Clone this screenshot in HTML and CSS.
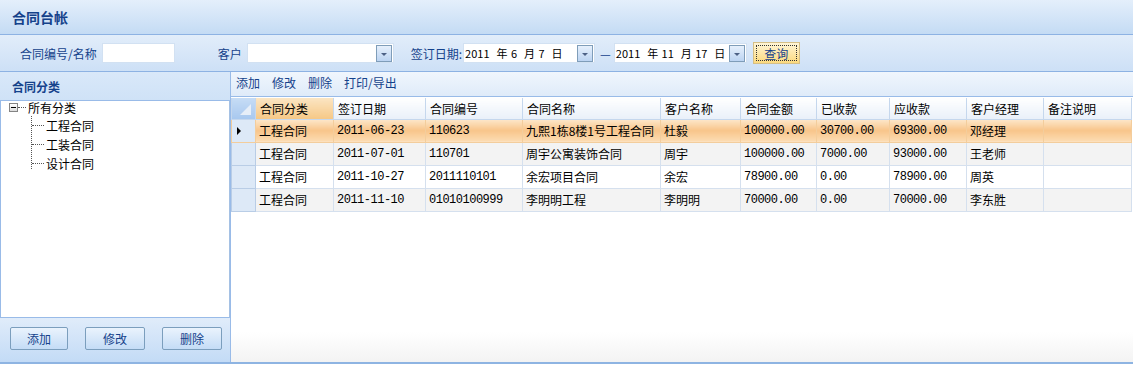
FILE: index.html
```html
<!DOCTYPE html>
<html lang="zh-CN">
  <head>
    <meta charset="UTF-8" />
    <title>合同台帐</title>
    <link rel="stylesheet" href="styles.css">
  </head>
  <body>
    <div class="title-bar">合同台帐</div>

    <div class="filter-bar">
      <label class="lbl">合同编号/名称</label>
      <input class="txt txt-code" type="text" />
      <label class="lbl lbl-client">客户</label>
      <div class="combo combo-client">
        <span class="combo-text"></span>
        <span class="drop-btn"><i></i></span>
      </div>
      <label class="lbl lbl-date">签订日期:</label>
      <div class="combo combo-date">
        <span class="combo-text">2011 &nbsp;年 6 &nbsp;月 7 &nbsp;日</span>
        <span class="drop-btn"><i></i></span>
      </div>
      <span class="dash">—</span>
      <div class="combo combo-date2">
        <span class="combo-text">2011 &nbsp;年 11 &nbsp;月 17 &nbsp;日</span>
        <span class="drop-btn"><i></i></span>
      </div>
      <button class="btn-query">查询</button>
    </div>

    <div class="main">
      <div class="side">
        <div class="side-head">合同分类</div>
        <div class="tree">
          <div class="tree-root"><span class="minus"></span><span class="dots-h"></span>所有分类</div>
          <div class="tree-kids">
            <div class="tree-item">工程合同</div>
            <div class="tree-item">工装合同</div>
            <div class="tree-item last">设计合同</div>
          </div>
        </div>
        <div class="side-foot">
          <button class="btn">添加</button>
          <button class="btn">修改</button>
          <button class="btn">删除</button>
        </div>
      </div>

      <div class="content">
        <div class="toolbar">
          <span>添加</span>
          <span>修改</span>
          <span>删除</span>
          <span>打印/导出</span>
        </div>
        <table class="grid">
          <colgroup>
            <col style="width:24px">
            <col style="width:78px">
            <col style="width:92px">
            <col style="width:97px">
            <col style="width:138px">
            <col style="width:80px">
            <col style="width:76px">
            <col style="width:73px">
            <col style="width:77px">
            <col style="width:77px">
            <col style="width:88px">
          </colgroup>
          <thead>
            <tr>
              <th class="sel-head"><i></i></th>
              <th class="active">合同分类</th>
              <th>签订日期</th>
              <th>合同编号</th>
              <th>合同名称</th>
              <th>客户名称</th>
              <th>合同金额</th>
              <th>已收款</th>
              <th>应收款</th>
              <th>客户经理</th>
              <th>备注说明</th>
            </tr>
          </thead>
          <tbody>
            <tr class="current">
              <td class="sel"><b></b></td>
              <td>工程合同</td>
              <td class="num">2011-06-23</td>
              <td class="num">110623</td>
              <td>九熙1栋8楼1号工程合同</td>
              <td>杜毅</td>
              <td class="num">100000.00</td>
              <td class="num">30700.00</td>
              <td class="num">69300.00</td>
              <td>邓经理</td>
              <td></td>
            </tr>
            <tr class="alt">
              <td class="sel"></td>
              <td>工程合同</td>
              <td class="num">2011-07-01</td>
              <td class="num">110701</td>
              <td>周宇公寓装饰合同</td>
              <td>周宇</td>
              <td class="num">100000.00</td>
              <td class="num">7000.00</td>
              <td class="num">93000.00</td>
              <td>王老师</td>
              <td></td>
            </tr>
            <tr>
              <td class="sel"></td>
              <td>工程合同</td>
              <td class="num">2011-10-27</td>
              <td class="num">2011110101</td>
              <td>余宏项目合同</td>
              <td>余宏</td>
              <td class="num">78900.00</td>
              <td class="num">0.00</td>
              <td class="num">78900.00</td>
              <td>周英</td>
              <td></td>
            </tr>
            <tr class="alt">
              <td class="sel"></td>
              <td>工程合同</td>
              <td class="num">2011-11-10</td>
              <td class="num">01010100999</td>
              <td>李明明工程</td>
              <td>李明明</td>
              <td class="num">70000.00</td>
              <td class="num">0.00</td>
              <td class="num">70000.00</td>
              <td>李东胜</td>
              <td></td>
            </tr>
          </tbody>
        </table>
        <div class="grid-fill"></div>
      </div>
    </div>
    <div class="bottom-line"></div>
  </body>
</html>
```

FILE: styles.css
```css
body {
  margin: 0;
  width: 1133px;
  height: 367px;
  overflow: hidden;
  font-family: "Noto Sans CJK SC", "DejaVu Sans", sans-serif;
  font-size: 12px;
  color: #000;
  background-color: #fff;
  display: flex;
  flex-direction: column;
}
.title-bar {
  height: 35px;
  box-sizing: border-box;
  padding: 0 0 0 12px;
  display: flex;
  align-items: center;
  font-size: 14px;
  font-weight: bold;
  color: #15428b;
  background: linear-gradient(#e4effb, #c4dbf4);
  border-bottom: 1px solid #8db2e3;
}
.filter-bar {
  height: 37px;
  box-sizing: border-box;
  display: flex;
  align-items: center;
  padding-left: 20px;
  background: linear-gradient(#e2edfa, #cde0f6);
  border-bottom: 1px solid #8db2e3;
}
.lbl {
  color: #15428b;
  margin-right: 3px;
}
.lbl-client {
  margin-left: 43px;
  margin-right: 5px;
}
.lbl-date {
  margin-left: 17px;
  margin-right: 1px;
}
.txt {
  height: 20px;
  box-sizing: border-box;
  border: 1px solid #d2e1f2;
  background: #fff;
  margin: 0 0 0 2px;
  padding: 0;
}
.txt-code {
  width: 73px;
}
.combo {
  height: 20px;
  box-sizing: border-box;
  border: 1px solid #d2e1f2;
  background: #fff;
  display: flex;
  align-items: center;
}
.combo-client {
  width: 147px;
}
.combo-date {
  width: 132px;
}
.combo-date2 {
  width: 133px;
}
.combo-text {
  flex: 1;
  padding-left: 1px;
  white-space: nowrap;
  overflow: hidden;
  font-size: 11px;
  word-spacing: 1px;
}
.drop-btn {
  width: 14px;
  height: 15px;
  margin-right: 1px;
  border: 1px solid #7f9db9;
  background: linear-gradient(#e6f0fc, #bcd4f2);
  display: flex;
  align-items: center;
  justify-content: center;
}
.drop-btn i {
  width: 0;
  height: 0;
  border-left: 3px solid transparent;
  border-right: 3px solid transparent;
  border-top: 3px solid #4d6185;
  margin-top: 2px;
}
.dash {
  color: #15428b;
  margin: 0 3px 0 5px;
}
.btn-query {
  margin-left: 6px;
  width: 47px;
  height: 22px;
  padding: 0;
  font-family: inherit;
  font-size: 12px;
  color: #15428b;
  background: linear-gradient(#fff5d6, #fbd97e);
  border: 1px solid #d6bf86;
  outline: 1px dotted #333;
  outline-offset: -4px;
}
.main {
  flex: 1;
  display: flex;
  min-height: 0;
}
.side {
  width: 230px;
  display: flex;
  flex-direction: column;
  background: linear-gradient(#e0ecfa, #c7ddf6);
}
.side-head {
  height: 28px;
  box-sizing: border-box;
  padding-left: 12px;
  display: flex;
  align-items: center;
  font-weight: bold;
  color: #15428b;
  background: linear-gradient(#d9e8f9, #cfe2f7);
}
.tree {
  height: 218px;
  box-sizing: border-box;
  background: #fff;
  border: 1px solid #99bbe8;
  border-right-color: #a5c1e4;
  padding: 0 0 0 8px;
}
.tree-root {
  display: flex;
  align-items: center;
  height: 13px;
}
.minus {
  width: 9px;
  height: 9px;
  box-sizing: border-box;
  border: 1px solid #848484;
  background: linear-gradient(#fff, #dcdcdc);
  position: relative;
}
.minus::after {
  content: "";
  position: absolute;
  left: 1px;
  top: 3px;
  width: 5px;
  height: 1px;
  background: #000;
}
.dots-h {
  width: 8px;
  border-top: 1px dotted #555;
  margin: 0 2px 0 0;
}
.tree-kids {
  margin-left: 22px;
  border-left: 1px dotted #555;
  height: 53px;
  margin-top: 2px;
}
.tree-item {
  display: flex;
  align-items: center;
  height: 19px;
}
.tree-item::before {
  content: "";
  width: 12px;
  border-top: 1px dotted #555;
  margin-right: 2px;
}
.side-foot {
  flex: 1;
  display: flex;
  align-items: flex-start;
  padding: 9px 0 0 10px;
  gap: 17px;
  background: linear-gradient(#e0ecfa, #c3dbf6);
}
.btn {
  width: 58px;
  height: 23px;
  padding: 0;
  font-family: inherit;
  font-size: 12px;
  color: #15428b;
  border: 1px solid #7b9ebd;
  border-radius: 2px;
  background: linear-gradient(#eaf3fd, #c4dcf6);
}
.btn + .btn {
  width: 60px;
}
.content {
  flex: 1;
  display: flex;
  flex-direction: column;
  border-left: 1px solid #99bbe8;
  min-width: 0;
}
.toolbar {
  height: 25px;
  box-sizing: border-box;
  display: flex;
  align-items: center;
  padding: 0 0 4px 5px;
  gap: 12px;
  color: #15428b;
  background: linear-gradient(#f0f6fd, #dfebf9);
  border-bottom: 1px solid #99bbe8;
}
.grid {
  border-collapse: collapse;
  table-layout: fixed;
  width: 900px;
  margin-top: 1px;
}
.grid th {
  box-sizing: border-box;
  height: 21px;
  padding: 0 0 0 4px;
  text-align: left;
  font-weight: normal;
  white-space: nowrap;
  overflow: hidden;
  background: linear-gradient(#ffffff, #e9f0f9);
  border: 1px solid #c5d7ed;
  border-top: none;
}
.grid th.active {
  background: linear-gradient(#fbe5c3, #f6c886);
}
.grid th.sel-head {
  padding: 0;
  background: linear-gradient(#c6dcf5, #a8c8ef);
  position: relative;
}
.sel-head i {
  position: absolute;
  right: 4px;
  bottom: 4px;
  width: 0;
  height: 0;
  border-left: 11px solid transparent;
  border-bottom: 11px solid #e6eef8;
}
.grid td {
  box-sizing: border-box;
  height: 23px;
  padding: 0 0 0 3px;
  white-space: nowrap;
  overflow: hidden;
  border: 1px solid #d5e0ee;
  border-top: none;
}
.grid td.num {
  font-size: 12px;
  font-family: "Liberation Mono", monospace;
  letter-spacing: -0.5px;
}
.grid td.sel {
  padding: 0;
  background: #dde9f7;
  border-color: #b9cde6;
  position: relative;
}
.sel b {
  position: absolute;
  left: 5px;
  top: 7px;
  width: 0;
  height: 0;
  border-top: 4px solid transparent;
  border-bottom: 4px solid transparent;
  border-left: 4px solid #000;
}
.grid tr.alt td {
  background: #f3f3f3;
}
.grid tr.alt td.sel,
.grid tr.current td.sel {
  background: #dde9f7;
}
.grid tr.current td {
  background: linear-gradient(#fde7cb, #f8c58a 50%, #fcdcb3);
  border-color: #f3cd9c;
}
.grid-fill {
  flex: 1;
  background: linear-gradient(#fff 80%, #f3f3f3);
}
.bottom-line {
  height: 3px;
  background: #fff;
  border-top: 2px solid #8eb4e2;
}
```
